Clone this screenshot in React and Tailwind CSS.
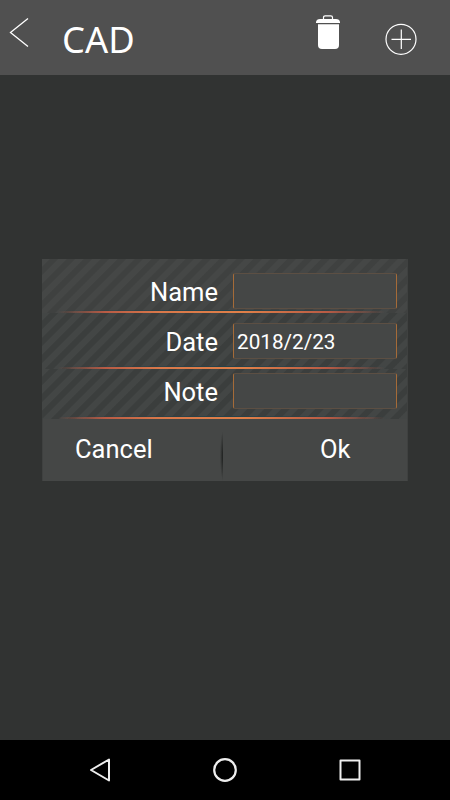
const FIELDS = [
    {
        label: 'Name',
        value: '',
        row: 'h-[54px] pt-3.5 bg-[repeating-linear-gradient(135deg,#454746_0px,#454746_5px,#3f4140_6px,#3f4140_11px,#454746_12px)]',
    },
    {
        label: 'Date',
        value: '2018/2/23',
        row: 'h-14 pt-2.5 bg-[repeating-linear-gradient(135deg,#434645_0px,#434645_5px,#3b3e3d_6px,#3b3e3d_11px,#434645_12px)]',
    },
    {
        label: 'Note',
        value: '',
        row: 'h-[50px] pt-1 bg-[repeating-linear-gradient(135deg,#434645_0px,#434645_5px,#3b3e3d_6px,#3b3e3d_11px,#434645_12px)]',
    },
];

const Header = () => (
    <header className="flex h-[75px] w-full shrink-0 items-start bg-[#505050]">
        <button className="ml-2 mt-[17px]" aria-label="Back">
            <svg width="22" height="31" viewBox="0 0 22 31" fill="none" stroke="#fff" strokeWidth="1.3">
                <path d="M20 1.500L2.500 15.500L20 29.500" />
            </svg>
        </button>
        <h1 className="ml-[32px] mt-[15px] w-[243px] font-['Noto_Sans',sans-serif] text-[36.3px] leading-[49px] text-white">
            CAD
        </h1>
        <button className="ml-[10px] mt-[14px]" aria-label="Delete">
            <svg width="26" height="36" viewBox="0 0 26 36" fill="#fff">
                <path d="M8.500 5V3.500Q8.500 1.800 10.200 1.800H15.800Q17.500 1.800 17.500 3.500V5" fill="none" stroke="#fff" strokeWidth="1.2" />
                <path d="M1 9V8Q1.500 5 5 5H21Q24.500 5 25 8V9Z" />
                <path d="M3 10.200H24V31Q24 35 20 35H7Q3 35 3 31Z" />
            </svg>
        </button>
        <button className="ml-[44px] mt-[23px]" aria-label="Add">
            <svg width="32" height="32" viewBox="0 0 32 32" fill="none" stroke="#fff" strokeWidth="1.2">
                <circle cx="16" cy="16.300" r="15" />
                <path d="M6.500 16.300H26M16.300 6.500V26" />
            </svg>
        </button>
    </header>
);

const FieldRow = ({ label, value, row }) => (
    <div className={`relative flex items-start ${row}`}>
        <label className="w-44 text-right text-[25.5px] leading-[39px]">{label}</label>
        <div className="ml-[15px] h-9 w-[164px] rounded-[2px] border border-x-[#a56b38] border-y-[#5c4f43] bg-[#454746] pl-[3px] text-[20.7px] leading-[36px]">
            {value}
        </div>
        <div className="absolute inset-x-4 bottom-0 h-[3px] bg-linear-to-r from-transparent via-[#24424a] to-transparent" />
        <div className="absolute left-4 right-3 bottom-0 h-0.5 bg-[linear-gradient(90deg,transparent,#b85b45_14%,#d9784a_30%,#df8049_55%,#b85b45_80%,transparent_97%)]" />
    </div>
);

const NavBar = () => (
    <nav className="flex h-[60px] w-full items-center justify-between bg-black pl-[88px] pr-[87px]">
        <svg width="24" height="26" viewBox="0 0 24 26" fill="none" stroke="#eee" strokeWidth="2" strokeLinejoin="round">
            <path d="M3 13L21 2.500V23.500Z" />
        </svg>
        <svg width="26" height="26" viewBox="0 0 26 26" fill="none" stroke="#eee" strokeWidth="2.200">
            <circle cx="13" cy="13" r="10.800" />
        </svg>
        <svg width="26" height="26" viewBox="0 0 26 26" fill="none" stroke="#eee" strokeWidth="2" strokeLinejoin="round">
            <path d="M3.500 3.500H22.500V22.500H3.500Z" />
        </svg>
    </nav>
);

export default function App() {
    return (
        <div className="flex h-[800px] w-[450px] flex-col overflow-hidden bg-[#313332] font-[Roboto,sans-serif] text-white">
            <Header />
            <main className="flex-1 pl-[42px] pt-[184px]">
                <section className="w-[366px] border-x border-[#3f4140] bg-[#454746]">
                    <div className="-ml-px">
                        {FIELDS.map((field) => (
                            <FieldRow key={field.label} {...field} />
                        ))}
                    </div>
                    <div className="flex h-[62px] items-start text-[25.5px] leading-[30px]">
                        <button className="w-[177px] pl-[32px] pt-[15px] text-left">Cancel</button>
                        <div className="mt-3 h-[50px] w-[3px] bg-[radial-gradient(100%_50%_at_100%_50%,#242625_20%,#454746)]" />
                        <button className="flex-1 pl-[97px] pt-[15px] text-left">Ok</button>
                    </div>
                </section>
            </main>
            <NavBar />
        </div>
    );
}
